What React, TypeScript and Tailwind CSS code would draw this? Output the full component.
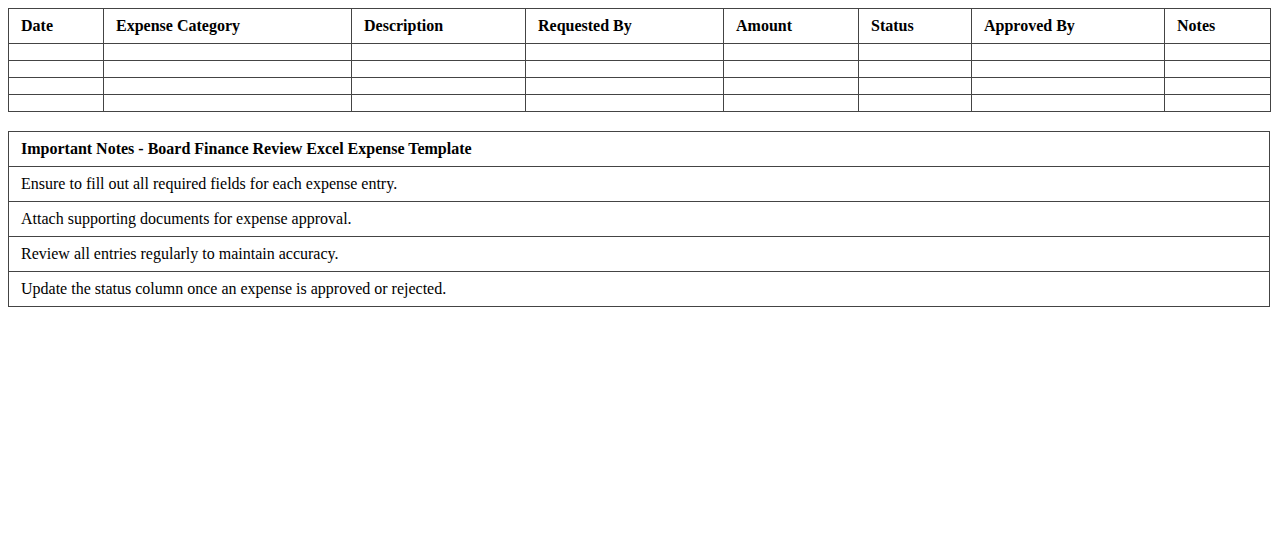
const headers = [
  'Date',
  'Expense Category',
  'Description',
  'Requested By',
  'Amount',
  'Status',
  'Approved By',
  'Notes',
];

const widths = [
  'w-[95px]',
  'w-[248px]',
  'w-[174px]',
  'w-[198px]',
  'w-[135px]',
  'w-[113px]',
  'w-[193px]',
  'w-[106px]',
];

const notes = [
  'Ensure to fill out all required fields for each expense entry.',
  'Attach supporting documents for expense approval.',
  'Review all entries regularly to maintain accuracy.',
  'Update the status column once an expense is approved or rejected.',
];

function App() {
  return (
    <div className="m-2 text-black font-['Liberation_Serif',serif] text-base">
      <table className="w-full table-fixed border-collapse mb-[19px]">
        <colgroup>
          {widths.map((w, i) => (
            <col key={i} className={w} />
          ))}
        </colgroup>
        <thead>
          <tr>
            {headers.map((h) => (
              <th
                key={h}
                className="border border-[#444] px-3 py-2 text-left font-bold leading-[18px]"
              >
                {h}
              </th>
            ))}
          </tr>
        </thead>
        <tbody>
          {[0, 1, 2, 3].map((r) => (
            <tr key={r}>
              {headers.map((h) => (
                <td key={h} className="border border-[#444] px-3 py-2" />
              ))}
            </tr>
          ))}
        </tbody>
      </table>

      <table className="w-full border-collapse">
        <tbody>
          <tr>
            <td className="border border-[#444] px-3 py-2 font-bold leading-[18px]">
              Important Notes - Board Finance Review Excel Expense Template
            </td>
          </tr>
          {notes.map((n) => (
            <tr key={n}>
              <td className="border border-[#444] px-3 py-2 leading-[18px]">{n}</td>
            </tr>
          ))}
        </tbody>
      </table>
    </div>
  );
}

export default App;
